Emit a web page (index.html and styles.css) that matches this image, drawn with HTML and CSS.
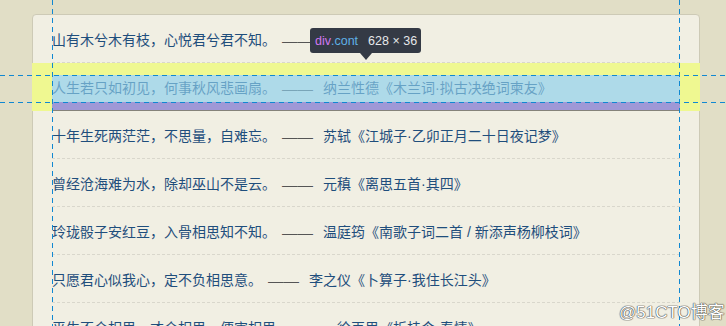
FILE: index.html
```html
<!DOCTYPE html>
<html lang="zh-CN">
<head>
<meta charset="utf-8">
<title>相思</title>
<link rel="stylesheet" href="styles.css">
</head>
<body>
<main class="card">
  <div class="cont"><span class="verse">山有木兮木有枝，心悦君兮君不知。</span><span class="dash">——</span><span class="src">《越人歌》</span></div>
  <div class="cont"><span class="verse">人生若只如初见，何事秋风悲画扇。</span><span class="dash">——</span><span class="src">纳兰性德《木兰词·拟古决绝词柬友》</span></div>
  <div class="cont"><span class="verse">十年生死两茫茫，不思量，自难忘。</span><span class="dash">——</span><span class="src">苏轼《江城子·乙卯正月二十日夜记梦》</span></div>
  <div class="cont"><span class="verse">曾经沧海难为水，除却巫山不是云。</span><span class="dash">——</span><span class="src">元稹《离思五首·其四》</span></div>
  <div class="cont"><span class="verse">玲珑骰子安红豆，入骨相思知不知。</span><span class="dash">——</span><span class="src">温庭筠《南歌子词二首 / 新添声杨柳枝词》</span></div>
  <div class="cont"><span class="verse">只愿君心似我心，定不负相思意。</span><span class="dash">——</span><span class="src">李之仪《卜算子·我住长江头》</span></div>
  <div class="cont"><span class="verse">平生不会相思，才会相思，便害相思。</span><span class="dash">——</span><span class="src">徐再思《折桂令·春情》</span></div>
</main>

<div class="hl-margin"></div>
<div class="hl-content"></div>
<div class="hl-padding"></div>
<div class="hl-border"></div>

<div class="guide guide-v guide-left"></div>
<div class="guide guide-v guide-right"></div>
<div class="guide guide-h guide-top"></div>
<div class="guide guide-h guide-bottom"></div>

<div class="infobar">
  <span class="tag">div</span><span class="cls">.cont</span><span class="sep"></span><span class="dims">628 × 36</span>
</div>

<div class="watermark">@51CTO博客</div>
</body>
</html>
```
FILE: styles.css
```css
html, body {
  margin: 0;
  padding: 0;
  height: 326px;
  overflow: hidden;
}
body {
  background: #e1dec6;
  font-family: "Liberation Sans", "Noto Sans CJK SC", sans-serif;
  position: relative;
}
.card {
  position: relative;
  z-index: 1;
  box-sizing: border-box;
  width: 668px;
  margin: 14px 0 0 32px;
  padding: 0 19px 40px;
  background: #f1efe3;
  border: 1px solid #cdcab6;
  border-radius: 4px;
}
.cont {
  margin-top: 12px;
  padding-bottom: 8px;
  border-bottom: 1px dashed #d9d7cc;
  height: 27px;
  line-height: 27px;
  font-size: 14px;
  color: #1f4e7c;
  white-space: nowrap;
}
.dash {
  display: inline-block;
  font-family: "Liberation Sans", sans-serif;
  font-size: 15.5px;
  line-height: 27px;
  color: #555;
  margin: 0 10px 0 6px;
  vertical-align: top;
}

/* devtools highlighter overlay */
.hl-margin, .hl-content, .hl-padding, .hl-border {
  position: absolute;
  z-index: 2;
}
.hl-margin {
  left: 32px; top: 63px;
  width: 668px; height: 48px;
  box-sizing: border-box;
  border-style: solid;
  border-color: #eff891;
  border-width: 12px 20px 0 20px;
}
.hl-content {
  left: 52px; top: 75px;
  width: 628px; height: 27px;
  background: rgba(140, 206, 236, 0.66);
}
.hl-padding {
  left: 52px; top: 102px;
  width: 628px; height: 8px;
  background: #9f98d6;
}
.hl-border {
  left: 52px; top: 110px;
  width: 628px; height: 1px;
  background: #85837a;
}

.guide { position: absolute; z-index: 3; }
.guide-v {
  top: 0; width: 1px; height: 326px;
  background: repeating-linear-gradient(to bottom, #1088d2 0 5px, transparent 5px 9px);
}
.guide-h {
  left: 0; height: 1px; width: 726px;
  background: repeating-linear-gradient(to right, #1088d2 0 5px, transparent 5px 9px);
}
.guide-left { left: 52px; }
.guide-right { left: 679px; }
.guide-top { top: 75px; }
.guide-bottom { top: 102px; }

.infobar {
  position: absolute;
  z-index: 4;
  left: 310px; top: 28px;
  width: 111px; height: 25px;
  box-sizing: border-box;
  padding: 0 4px 0 5px;
  background: #343a45;
  border-radius: 3px;
  display: flex;
  align-items: center;
  font-family: "Liberation Sans", Arial, sans-serif;
  font-size: 12.5px;
  white-space: nowrap;
}
.infobar::after {
  content: "";
  position: absolute;
  left: 50px; top: 25px;
  border-left: 6px solid transparent;
  border-right: 6px solid transparent;
  border-top: 7px solid #343a45;
}
.tag { color: #cf78f0; }
.cls { color: #5fb0e6; }
.sep {
  width: 1px; height: 17px;
  background: #6b717c;
  margin: 0 5px;
}
.dims { color: #e6e8ea; }

.watermark {
  position: absolute;
  z-index: 5;
  left: 619px; top: 298px;
  font-family: "Liberation Sans", "Noto Sans CJK SC", sans-serif;
  font-size: 17px;
  color: #ffffff;
  text-shadow: 0 0 1px #444, 0 0 1px #444, 0 0 1px #444;
  white-space: nowrap;
}
```
